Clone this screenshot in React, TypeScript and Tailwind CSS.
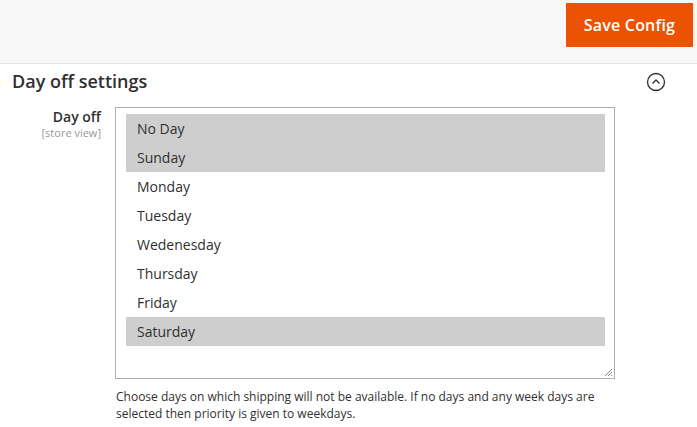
const days = [
  { name: "No Day", selected: true },
  { name: "Sunday", selected: true },
  { name: "Monday", selected: false },
  { name: "Tuesday", selected: false },
  { name: "Wedenesday", selected: false },
  { name: "Thursday", selected: false },
  { name: "Friday", selected: false },
  { name: "Saturday", selected: true },
];

function CollapseIcon() {
  return (
    <svg width="20" height="20" viewBox="0 0 20 20" fill="none">
      <circle cx="10" cy="10" r="8.5" stroke="#303030" strokeWidth="1.3" />
      <path d="M6.5 11.5 L10 8 L13.5 11.5" stroke="#303030" strokeWidth="1.3" />
    </svg>
  );
}

function ResizeHandle() {
  return (
    <svg width="9" height="9" viewBox="0 0 9 9" className="absolute right-[1px] bottom-[1px]">
      <path d="M1 8 L8 1 M4 8 L8 4 M7 8 L8 7" stroke="#777" strokeWidth="0.9" />
    </svg>
  );
}

export default function App() {
  return (
    <div className="w-[697px] h-[427px] bg-white text-[#303030] font-['Open_Sans',sans-serif] overflow-hidden">
      <div className="h-[64px] bg-[#f8f8f8] border-b border-[#e3e3e3] flex justify-end items-start pt-[3px] pr-[4px]">
        <button className="h-[44px] w-[127px] bg-[#eb5202] text-white text-[16px] font-semibold tracking-[0.2px]">
          Save Config
        </button>
      </div>

      <div className="flex items-center justify-between pl-[12px] pr-[31px] h-[35px]">
        <h2 className="text-[18px] font-semibold leading-none -mt-[2px]">Day off settings</h2>
        <CollapseIcon />
      </div>

      <div className="flex mt-[8px]">
        <div className="w-[101px] text-right leading-none pt-[3px]">
          <div className="text-[14px] font-semibold">Day off</div>
          <div className="text-[11px] text-[#999] mt-[3px]">[store view]</div>
        </div>
        <div className="ml-[14px] w-[500px]">
          <div className="relative h-[272px] border border-[#adadad] pt-[6px] pl-[10px] pr-[9px]">
            {days.map((d) => (
              <div
                key={d.name}
                className={`h-[29px] flex items-center pl-[11px] text-[14px] ${d.selected ? "bg-[#cecece]" : ""}`}
              >
                {d.name}
              </div>
            ))}
            <ResizeHandle />
          </div>
          <p className="text-[12px] leading-[17px] mt-[9px] pl-[1px] pr-[10px]">
            Choose days on which shipping will not be available. If no days and any week days are
            selected then priority is given to weekdays.
          </p>
        </div>
      </div>
    </div>
  );
}
